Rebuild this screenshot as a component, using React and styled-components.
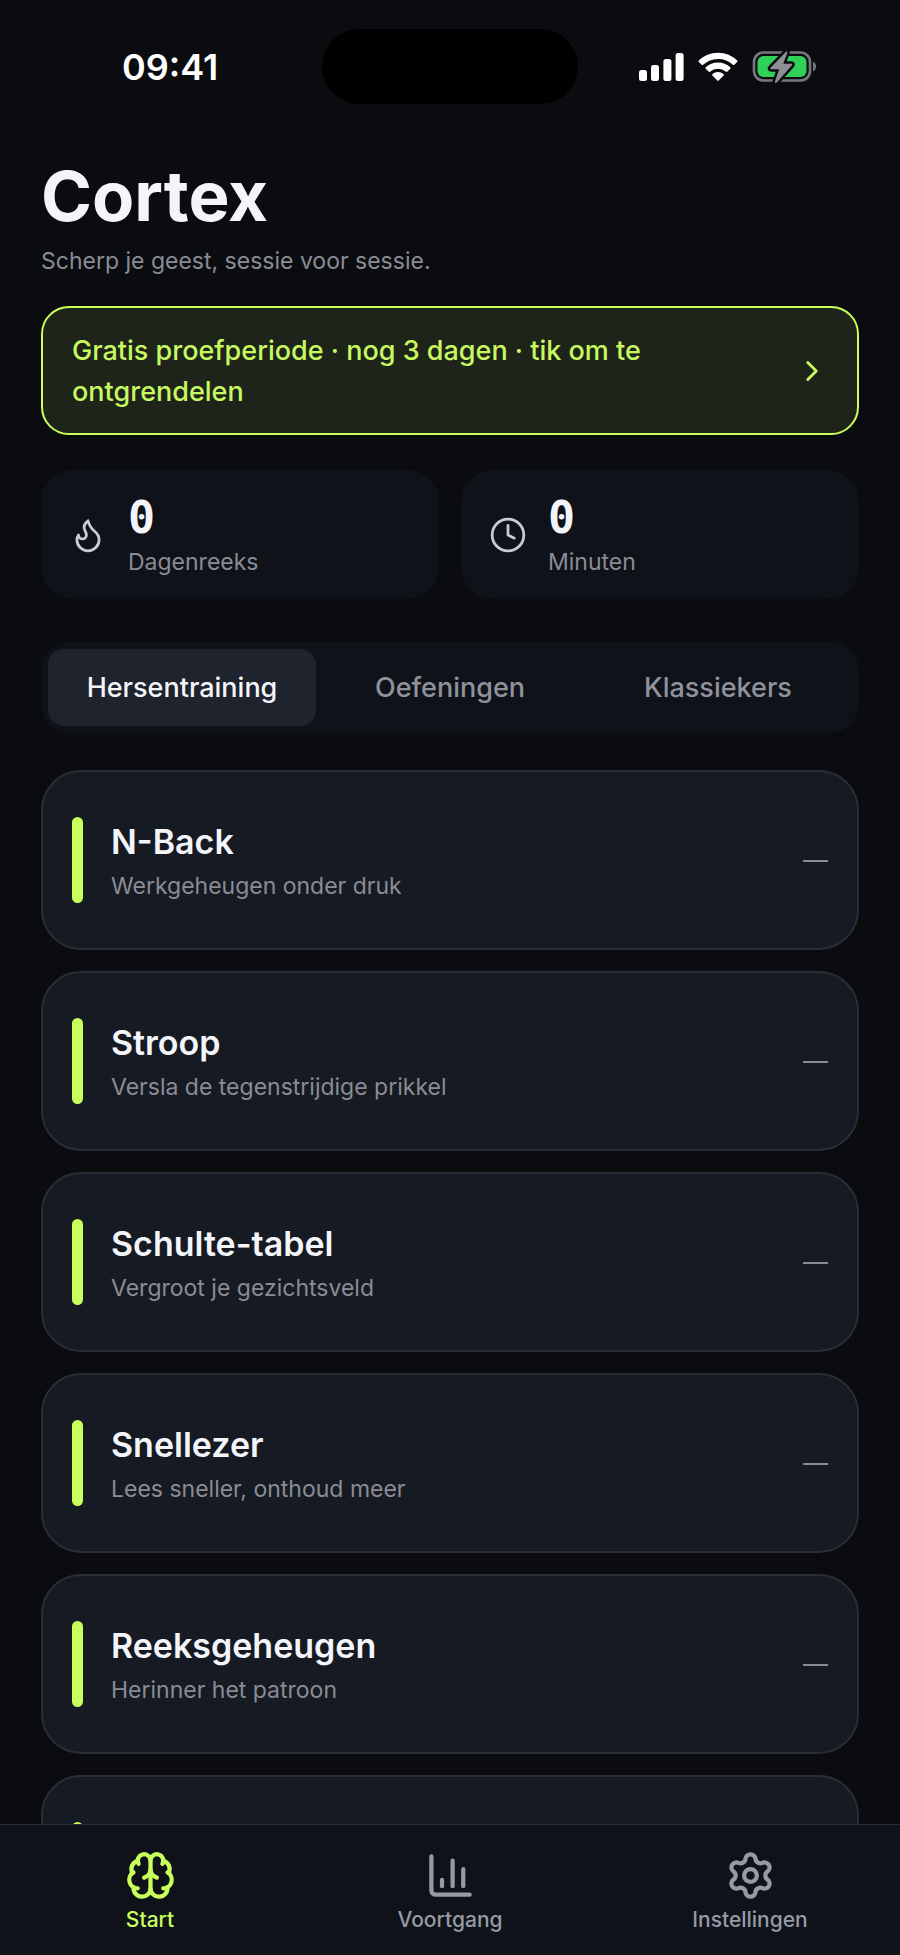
import React, { useState } from "react";
import styled, { createGlobalStyle } from "styled-components";
import {
  Brain,
  ChartColumn,
  ChevronRight,
  Clock,
  Flame,
  Settings,
} from "lucide-react";

const trainings = [
  { name: "N-Back", info: "Werkgeheugen onder druk" },
  { name: "Stroop", info: "Versla de tegenstrijdige prikkel" },
  { name: "Schulte-tabel", info: "Vergroot je gezichtsveld" },
  { name: "Snellezer", info: "Lees sneller, onthoud meer" },
  { name: "Reeksgeheugen", info: "Herinner het patroon" },
];

const tabs = ["Hersentraining", "Oefeningen", "Klassiekers"];

const navItems = [
  { label: "Start", icon: Brain },
  { label: "Voortgang", icon: ChartColumn },
  { label: "Instellingen", icon: Settings },
];

const StatusBar = () => {
  return (
    <Status>
      <Time>09:41</Time>
      <Island />
      <StatusIcons>
        <svg width="45" height="30" viewBox="0 0 45 30" fill="#fff">
          <rect x="0" y="18" width="8" height="11" rx="2.5" />
          <rect x="12" y="13" width="8" height="16" rx="2.5" />
          <rect x="24.4" y="7" width="8" height="22" rx="2.5" />
          <rect x="36.6" y="1" width="8" height="28" rx="2.5" />
        </svg>
        <svg width="40" height="30" viewBox="0 0 40 30" fill="#fff">
          <path d="M20 .8c7.4 0 14.2 2.9 19.2 7.7.4.4.4 1 0 1.4l-2.9 2.9c-.4.4-1 .4-1.4 0A21.5 21.5 0 0 0 20 6.9c-5.7 0-11 2.2-14.9 5.9-.4.4-1 .4-1.4 0L.8 9.9c-.4-.4-.4-1 0-1.4C5.8 3.7 12.6.8 20 .8z" />
          <path d="M20 10.5c4.7 0 9 1.8 12.3 4.8.4.4.4 1 0 1.4l-2.9 2.9c-.4.4-1 .4-1.4.1a12 12 0 0 0-16 0c-.4.3-1 .3-1.4-.1l-2.9-2.9c-.4-.4-.4-1 0-1.4 3.3-3 7.6-4.8 12.3-4.8z" />
          <path d="M20 20c2.1 0 4 .8 5.5 2 .4.4.5 1 .1 1.4l-4.9 5c-.4.4-1 .4-1.4 0l-4.9-5c-.4-.4-.3-1 .1-1.4 1.5-1.2 3.4-2 5.5-2z" />
        </svg>
        <svg width="65" height="34" viewBox="0 0 65 34">
          <rect x="2" y="2.5" width="56" height="28" rx="9.5" fill="none" stroke="#77787b" strokeWidth="2.6" />
          <rect x="5.5" y="6" width="49" height="21" rx="6" fill="#30d158" />
          <path d="M61 11.8c4 1 4 8.4 0 9.4z" fill="#77787b" />
          <path
            d="M34 1.8 18.5 17.8c-.7.9-.3 1.5.7 1.5h8L23 31.3c-.4 1.6.9 2 2 .9L40 15.3c.7-.9.3-1.6-.7-1.6h-8L35.2 2.9c.4-1.4-.3-2-1.2-1.1z"
            fill="#8e8f94"
            stroke="#0a0c10"
            strokeWidth="5"
            paintOrder="stroke"
            strokeLinejoin="round"
          />
        </svg>
      </StatusIcons>
    </Status>
  );
};

const StatCard = ({ icon: Icon, value, label }) => {
  return (
    <Stat>
      <Icon size={38} strokeWidth={1.75} color="#c9cbd6" />
      <div>
        <StatValue>{value}</StatValue>
        <StatLabel>{label}</StatLabel>
      </div>
    </Stat>
  );
};

const TrainingCard = ({ name, info }) => {
  return (
    <Card type="button">
      <Accent />
      <CardText>
        <CardTitle>{name}</CardTitle>
        <CardInfo>{info}</CardInfo>
      </CardText>
      <Score>—</Score>
    </Card>
  );
};

const App = () => {
  const [tab, setTab] = useState(tabs[0]);
  const [page, setPage] = useState("Start");

  return (
    <Screen>
      <GlobalStyle />
      <StatusBar />
      <Content>
        <Title>Cortex</Title>
        <Subtitle>Scherp je geest, sessie voor sessie.</Subtitle>
        <TrialBanner type="button">
          <TrialText>
            Gratis proefperiode · nog 3 dagen · tik om te ontgrendelen
          </TrialText>
          <ChevronRight size={34} strokeWidth={2} />
        </TrialBanner>
        <Stats>
          <StatCard icon={Flame} value="0" label="Dagenreeks" />
          <StatCard icon={Clock} value="0" label="Minuten" />
        </Stats>
        <Tabs>
          {tabs.map((name) => (
            <Tab
              key={name}
              type="button"
              $active={name === tab}
              onClick={() => setTab(name)}
            >
              {name}
            </Tab>
          ))}
        </Tabs>
        <List>
          {trainings.map((item) => (
            <TrainingCard key={item.name} {...item} />
          ))}
          <Card type="button" aria-label="Meer trainingen">
            <Accent />
          </Card>
        </List>
      </Content>
      <BottomNav>
        {navItems.map(({ label, icon: Icon }) => (
          <NavButton
            key={label}
            type="button"
            $active={label === page}
            onClick={() => setPage(label)}
          >
            <Icon size={51} strokeWidth={2} />
            {label}
          </NavButton>
        ))}
      </BottomNav>
    </Screen>
  );
};

export default App;

const GlobalStyle = createGlobalStyle`
  * {
    box-sizing: border-box;
  }
  body {
    margin: 0;
    background-color: #0a0c10;
    font-family: "Inter", "Liberation Sans", sans-serif;
  }
  button {
    margin: 0;
    border: none;
    background: none;
    font-family: inherit;
    text-align: left;
    cursor: pointer;
  }
`;

const Screen = styled.div`
  display: flex;
  flex-direction: column;
  height: 100vh;
  overflow: hidden;
  background-color: #0a0c10;
  color: #f4f5fa;
`;

const Status = styled.header`
  flex: none;
  display: grid;
  grid-template-columns: 1fr 256px 1fr;
  align-items: center;
  padding: 29px 0 0;
`;

const Time = styled.span`
  padding-left: 122px;
  color: #fff;
  font-size: 36px;
  font-weight: 600;
  line-height: 44px;
`;

const Island = styled.div`
  height: 75px;
  border-radius: 38px;
  background-color: #000;
`;

const StatusIcons = styled.div`
  display: flex;
  align-items: center;
  gap: 14px;
  padding-left: 61px;
`;

const Content = styled.main`
  flex: 1;
  min-height: 0;
  overflow: hidden;
  padding: 58px 41px 0;
`;

const Title = styled.h1`
  margin: 0;
  font-size: 69px;
  font-weight: 700;
  line-height: 68px;
`;

const Subtitle = styled.p`
  margin: 14px 0 28px;
  color: #8a8c95;
  font-size: 23px;
  line-height: 34px;
`;

const TrialBanner = styled.button`
  display: flex;
  align-items: center;
  justify-content: space-between;
  width: 100%;
  padding: 22px 28px 21px 29px;
  border: 2px solid #c8ff5a;
  border-radius: 28px;
  background-color: #1f241b;
  color: #c8f860;
`;

const TrialText = styled.span`
  max-width: 600px;
  font-size: 27px;
  font-weight: 500;
  line-height: 41px;
`;

const Stats = styled.section`
  display: grid;
  grid-template-columns: 1fr 1fr;
  gap: 22px;
  margin-top: 35px;
`;

const Stat = styled.div`
  display: flex;
  align-items: center;
  gap: 21px;
  height: 129px;
  padding: 0 28px;
  border-radius: 32px;
  background-color: #0f1219;
`;

const StatValue = styled.div`
  font-family: "DejaVu Sans Mono", monospace;
  font-size: 45px;
  font-weight: 700;
  line-height: 54px;
`;

const StatLabel = styled.div`
  color: #8a8c95;
  font-size: 23px;
  line-height: 34px;
`;

const Tabs = styled.nav`
  display: grid;
  grid-template-columns: repeat(3, 1fr);
  margin-top: 43px;
  padding: 7px;
  border-radius: 28px;
  background-color: #0f1219;
`;

const Tab = styled.button`
  height: 77px;
  padding: 0;
  border-radius: 16px;
  background-color: ${({ $active }) => ($active ? "#1f232e" : "transparent")};
  color: ${({ $active }) => ($active ? "#f4f5fa" : "#8f929c")};
  font-size: 27px;
  font-weight: 500;
  text-align: center;
`;

const List = styled.div`
  display: flex;
  flex-direction: column;
  gap: 21px;
  margin-top: 37px;
`;

const Card = styled.button`
  display: flex;
  align-items: center;
  gap: 28px;
  width: 100%;
  height: 180px;
  padding: 0 29px;
  border: 2px solid #2a2d35;
  border-radius: 40px;
  background-color: #161a22;
  color: #f4f5fa;
`;

const Accent = styled.span`
  width: 11px;
  height: 86px;
  border-radius: 6px;
  background-color: #c8ff5a;
`;

const CardText = styled.span`
  display: flex;
  flex: 1;
  flex-direction: column;
  gap: 4px;
  padding-top: 2px;
`;

const CardTitle = styled.span`
  font-size: 34px;
  font-weight: 600;
  line-height: 46px;
`;

const CardInfo = styled.span`
  color: #8a8c95;
  font-size: 23px;
  line-height: 34px;
`;

const Score = styled.span`
  color: #8a8c95;
  font-size: 25px;
  line-height: 34px;
`;

const BottomNav = styled.nav`
  flex: none;
  display: grid;
  grid-template-columns: repeat(3, 1fr);
  height: 131px;
  padding-top: 25px;
  border-top: 1px solid #2a2d33;
  background-color: #0f1219;
`;

const NavButton = styled.button`
  display: flex;
  flex-direction: column;
  align-items: center;
  gap: 5px;
  padding: 0;
  color: ${({ $active }) => ($active ? "#c8ff5a" : "#969aa6")};
  font-size: 21px;
  font-weight: 500;
  line-height: 28px;
`;
